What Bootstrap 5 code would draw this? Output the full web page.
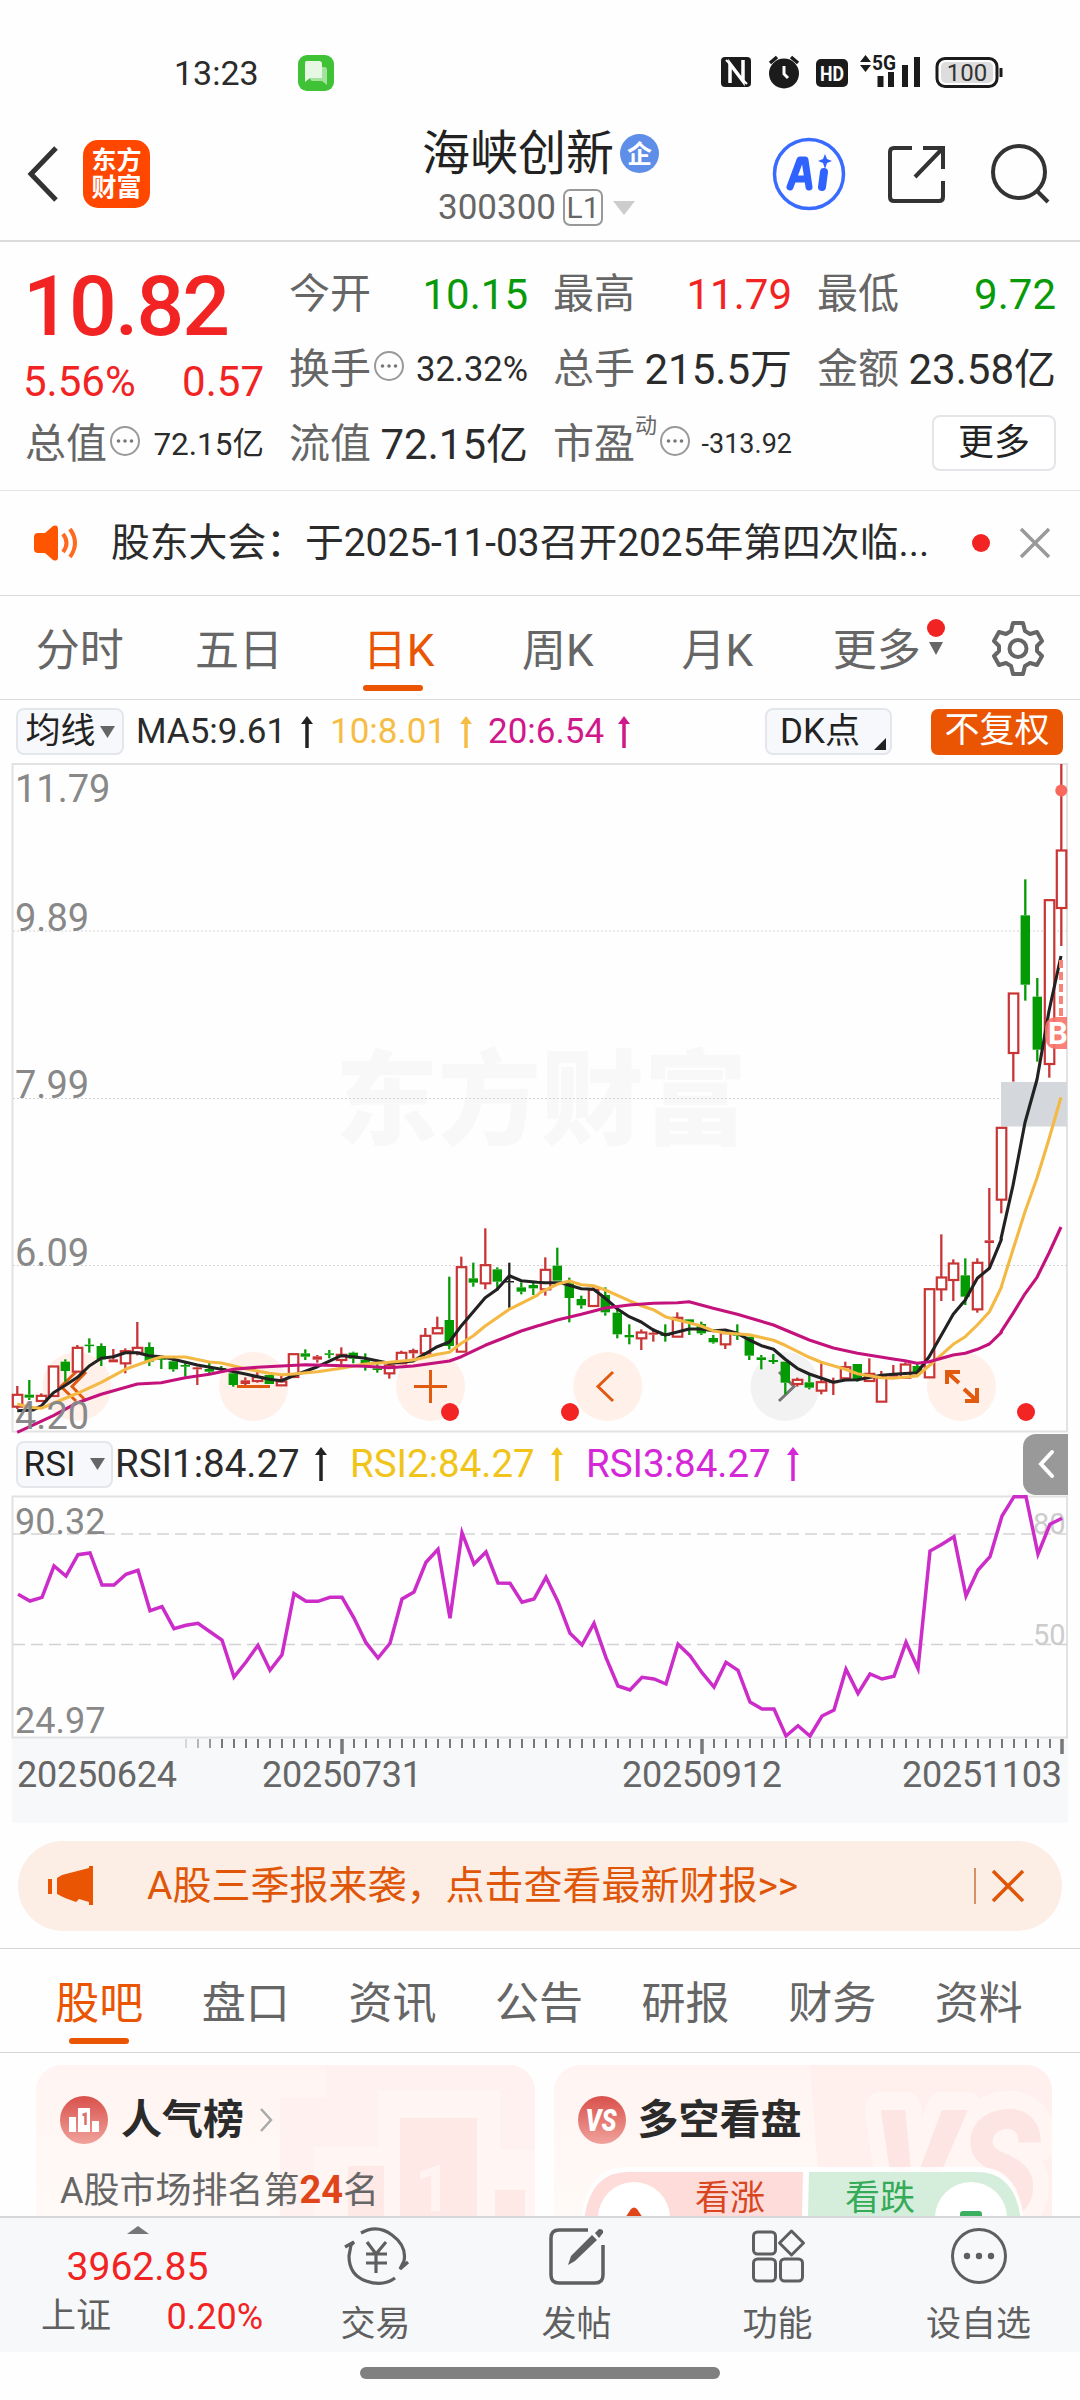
<!DOCTYPE html>
<html lang="zh-CN">
<head>
<meta charset="utf-8">
<meta name="viewport" content="width=device-width, initial-scale=1">
<title>海峡创新 300300</title>
<link rel="stylesheet" href="https://cdn.jsdelivr.net/npm/bootstrap@5.3.0/dist/css/bootstrap.min.css">
<style>
:root{--orange:#ea5504;--red:#f12323;--green:#099a09;--ink:#2b2b2b;--gray:#666;--line:#dadada}
body{width:1080px;height:2400px;overflow:hidden;background:#fefefe;color:var(--ink);font-family:Roboto,"Noto Sans CJK SC",sans-serif;line-height:1;letter-spacing:0}
svg{display:block;flex:none;overflow:visible}
svg text{font-family:Roboto,"Noto Sans CJK SC",sans-serif}
.statusbar{height:115px;padding:30px 76px 0 174px}
.clock{font-size:34px;width:124px;padding-top:26px}
.topbar{height:127px;padding:0 30px 8px 28px;border-bottom:2px solid var(--line)}
.brandbox{width:67px;height:68px;border-radius:15px;background:#ff4700;color:#fff;font-size:25px;font-weight:700;line-height:27px;margin-left:26px}
.titlebox{margin-left:272px;padding-top:6px}
.stockname{font-size:48px;line-height:54px;color:#222}
.codeline{font-size:35px;line-height:38px;color:#666;margin-top:8px;padding-left:16px}
.level{border:2px solid #999;border-radius:7px;width:40px;height:37px;font-size:30px;line-height:34px;margin-left:7px;margin-right:10px}
.quotes{height:249px;padding:15px 24px 0 25px;gap:25px;border-bottom:1px solid #e6e6e6}
.qcol{width:239px}
.qrow{height:75px}
.price{height:100px;font-size:84px;font-weight:500;color:var(--red);letter-spacing:-1.8px;margin-left:-2px}
.chg{height:50px;font-size:42px;color:var(--red);margin-left:-2px}
.lab{font-size:41px;color:var(--gray)}
.val{font-size:42px}
.tipic{margin:0 0 7px 2px}
.v-sm{font-size:34.5px}.v-xs{font-size:31.5px}.v-min{font-size:27px}
.up{color:var(--red)}.dn{color:var(--green)}
.morebtn{width:124px;height:56px;font-size:36px;border:2px solid #e3e5e8;border-radius:8px;padding:0;line-height:50px;color:#222;background:#fff;margin-bottom:4px}
.notice{height:105px;padding:0 30px 0 34px;border-bottom:1px solid var(--line);font-size:38.8px}
.dot{width:18px;height:18px;border-radius:50%;background:var(--red);flex:none}
.periods{height:104px;border-bottom:1px solid var(--line);font-size:44px;color:var(--gray);padding:0 36px 0 0}
.periods .slot{width:159.400px}
.tab-i{position:relative;display:inline-block;line-height:56px}
.periods .tab-i{top:3px}
.more-mark{position:absolute;left:94px;top:-4px}
.on{color:var(--orange)}
.uline{position:absolute;left:0;bottom:-12px;width:60px;height:6px;border-radius:3px;background:var(--orange)}
.indbar{height:63px;padding:0 17px 0 16px;font-size:35px}
.chip{height:47px;border:2px solid #e3e6ea;border-radius:8px;background:#f7f8fb;padding:0;font-size:35px;line-height:41px;color:#222}
.chip-on{height:46px;width:132px;border-radius:7px;background:var(--orange);color:#fff;font-size:35px;line-height:44px;text-align:center}
.rsibar{height:64px;padding-left:16px;font-size:38.500px}
.fold{width:45px;height:61px;border-radius:13px 0 0 13px;background:#999;margin-right:12px}
.banner{height:90px;margin:18px 18px 17px;border-radius:45px;background:#fcede5;color:#df5608;font-size:39px;padding:0 38px 0 30px}
.secttabs{height:105px;border-top:1px solid #d5d5d5;border-bottom:1px solid #d5d5d5;padding:0 28px 0 26px;font-size:44px;color:var(--gray)}
.secttabs .tab-i{top:3px}
.secttabs .uline{left:14px}
.feeds{height:163px;overflow:hidden;padding:12px 28px 0 36px;gap:19px}
.feedcard{width:499px;height:240px;border-radius:26px;background:linear-gradient(#fff4f2,#fffaf7 60%);position:relative;overflow:hidden}
.deco{position:absolute;left:0;top:0}
.fc-body{position:relative;padding:30px 24px 0 24px}
.fc-title{font-size:41px;font-weight:700;line-height:50px;color:#2b2b2b}
.fc-sub{font-size:36px;color:var(--gray);line-height:44px;margin-top:23px}
.fc-sub b{color:#e0451a;font-size:38px}
.dock{height:136px;background:#f7f8fa;border-top:2px solid #d5d7da;color:#5f5f5f;font-size:35px}
.dock-idx{width:275px;padding-top:8px}
.dock-item{width:201px;padding-top:9px}
.dock-item span{margin-top:18px;line-height:44px}
.homebar{width:360px;height:12px;border-radius:6px;background:#808080;margin:15px auto 0}
</style>
</head>
<body>
<div class="statusbar d-flex align-items-start">
  <div class="clock">13:23</div>
  <svg width="36" height="36" viewBox="0 0 36 36" style="margin-top:25px"><rect width="36" height="36" rx="9" fill="#3fc235"/><path d="M8 6h13q3 0 3 3v14H12l-5 4V9q0-3 1-3z" fill="#e6f8e3"/><path d="M26 12q3 0 3 3v15l-5-4H15q-3 0-3-3h12V12z" fill="#a5e29d"/></svg>
  <svg class="ms-auto" width="287" height="36" viewBox="716 54 287 36" style="margin-top:24px">
    <rect x="720" y="57" width="30" height="30" rx="4" fill="#1b1b1b"/><path d="M729 83V64l13 17V60" fill="none" stroke="#fff" stroke-width="3.500"/><path d="M729 64l-4-4M742 80l4 4" stroke="#fff" stroke-width="2"/>
    <circle cx="783" cy="73.500" r="15" fill="#1b1b1b"/><path d="M769 63l7-6M797 63l-7-6" stroke="#1b1b1b" stroke-width="3.500"/><path d="M783 66v8l4 4" fill="none" stroke="#fff" stroke-width="3"/>
    <rect x="815" y="59" width="32" height="28" rx="5" fill="#1b1b1b"/><text x="831" y="81" font-size="21" font-weight="700" fill="#fff" text-anchor="middle" textLength="24" lengthAdjust="spacingAndGlyphs">HD</text>
    <path d="M859 62l5.500-7 5.500 7zM859 65l5.500 7 5.500-7z" fill="#1b1b1b"/><text x="871" y="70" font-size="20" font-weight="700" fill="#1b1b1b" textLength="24" lengthAdjust="spacingAndGlyphs">5G</text>
    <path d="M879.500 76v11M890 72v15M904 65v22M916 57v30" stroke="#1b1b1b" stroke-width="6"/>
    <rect x="936" y="58.500" width="60" height="28" rx="8" fill="none" stroke="#1b1b1b" stroke-width="3"/><rect x="940" y="62" width="52" height="21" rx="5" fill="#ddd"/><path d="M1000 68v9" stroke="#1b1b1b" stroke-width="3"/><text x="966" y="81" font-size="24" fill="#333" text-anchor="middle">100</text>
  </svg>
</div>

<header class="topbar d-flex align-items-center">
  <svg width="29" height="54" viewBox="0 0 29 54"><path d="M28 1L3 27l25 26" fill="none" stroke="#333" stroke-width="5"/></svg>
  <div class="brandbox d-flex flex-column justify-content-center text-center"><span>东方</span><span>财富</span></div>
  <div class="titlebox d-flex flex-column">
    <div class="d-flex align-items-center stockname">海峡创新<svg width="39" height="39" viewBox="0 0 39 39" style="margin-left:6px"><circle cx="19.500" cy="19.500" r="19.500" fill="#5f8ee8"/><text x="19.500" y="28.500" font-size="25" font-weight="700" fill="#fff" text-anchor="middle">企</text></svg></div>
    <div class="d-flex align-items-center codeline">300300<span class="level text-center">L1</span><svg width="22" height="14" viewBox="0 0 22 14"><path d="M0 0h22L11 14z" fill="#ccc"/></svg></div>
  </div>
  <svg class="ms-auto" width="72" height="72" viewBox="0 0 72 72"><circle cx="36" cy="36" r="34.500" fill="none" stroke="#3a6bff" stroke-width="3.500"/><path d="M17 49L27 22h5l4 27M22 41h12" fill="none" stroke="#2f62ff" stroke-width="7" stroke-linecap="round" stroke-linejoin="round"/><path d="M51 34l-2 15" stroke="#2f62ff" stroke-width="8" stroke-linecap="round"/><path d="M52 16l2 5 5 2-5 2-2 6-2-6-5-2 5-2z" fill="#2f62ff"/></svg>
  <svg width="58" height="58" viewBox="0 0 58 58" style="margin-left:43px"><path d="M24 3H6q-4 0-4 4v45q0 4 4 4h45q4 0 4-4V36M55 24V3H35M55 3L27 32" fill="none" stroke="#333" stroke-width="4"/></svg>
  <svg width="59" height="59" viewBox="0 0 59 59" style="margin-left:45px"><circle cx="28" cy="28" r="26" fill="none" stroke="#333" stroke-width="4"/><path d="M46 47l11 11" stroke="#333" stroke-width="4"/></svg>
</header>

<section class="quotes d-flex">
  <div class="qcol">
    <div class="price d-flex align-items-center">10.82</div>
    <div class="chg d-flex align-items-center justify-content-between"><span>5.56%</span><span>0.57</span></div>
    <div class="qrow d-flex align-items-center"><span class="lab">总值</span><svg class="tipic" width="30" height="30" viewBox="0 0 30 30"><use href="#tip"/></svg><span class="v-xs ms-auto">72.15亿</span></div>
  </div>
  <div class="qcol">
    <div class="qrow d-flex align-items-center justify-content-between"><span class="lab">今开</span><span class="val dn">10.15</span></div>
    <div class="qrow d-flex align-items-center"><span class="lab">换手</span><svg class="tipic" width="30" height="30" viewBox="0 0 30 30"><g id="tip"><circle cx="16" cy="15" r="14" fill="none" stroke="#999" stroke-width="2"/><g fill="#777"><circle cx="9.500" cy="15" r="1.800"/><circle cx="16" cy="15" r="1.800"/><circle cx="22.500" cy="15" r="1.800"/></g></g></svg><span class="v-sm ms-auto">32.32%</span></div>
    <div class="qrow d-flex align-items-center justify-content-between"><span class="lab">流值</span><span class="val">72.15亿</span></div>
  </div>
  <div class="qcol">
    <div class="qrow d-flex align-items-center justify-content-between"><span class="lab">最高</span><span class="val up">11.79</span></div>
    <div class="qrow d-flex align-items-center justify-content-between"><span class="lab">总手</span><span class="val">215.5万</span></div>
    <div class="qrow d-flex align-items-center"><span class="lab">市盈</span><span class="lab align-self-start" style="font-size:22px;padding-top:8px">动</span><svg class="tipic" width="30" height="30" viewBox="0 0 30 30"><use href="#tip"/></svg><span class="v-min ms-auto">-313.92</span></div>
  </div>
  <div class="qcol">
    <div class="qrow d-flex align-items-center justify-content-between"><span class="lab">最低</span><span class="val dn">9.72</span></div>
    <div class="qrow d-flex align-items-center justify-content-between"><span class="lab">金额</span><span class="val">23.58亿</span></div>
    <div class="qrow d-flex align-items-center justify-content-end"><button class="btn morebtn">更多</button></div>
  </div>
</section>

<section class="notice d-flex align-items-center">
  <svg width="44" height="36" viewBox="0 0 44 36"><path d="M0 12q0-4 4-4h7L19 1q5-2 5 3v28q0 5-5 3l-8-7H4q-4 0-4-4z" fill="#ff5500"/><path d="M29 9q7 9 0 18M36 4q10 14 0 28" fill="none" stroke="#ff6a20" stroke-width="4"/></svg>
  <span class="text-nowrap" style="margin-left:33px">股东大会：于2025-11-03召开2025年第四次临...</span>
  <span class="dot ms-auto"></span>
  <svg width="30" height="30" viewBox="0 0 30 30" style="margin-left:30px"><path d="M1 1l28 28M29 1L1 29" stroke="#999" stroke-width="3.500"/></svg>
</section>

<nav class="periods d-flex align-items-center">
  <span class="slot text-center"><span class="tab-i">分时</span></span><span class="slot text-center"><span class="tab-i">五日</span></span><span class="slot text-center on"><span class="tab-i">日K<i class="uline"></i></span></span><span class="slot text-center"><span class="tab-i">周K</span></span><span class="slot text-center"><span class="tab-i">月K</span></span>
  <span class="slot text-center"><span class="tab-i">更多<svg class="more-mark" width="20" height="40" viewBox="0 0 20 40"><circle cx="9" cy="9" r="9" fill="#f12323"/><path d="M2 23h14l-7 13z" fill="#666"/></svg></span></span>
  <svg class="ms-auto" width="52" height="52" viewBox="0 0 52 52"><path d="M21 1h10l2 8 5 3 7-2 5 9-5 5v5l5 5-5 9-7-2-5 3-2 8H21l-2-8-5-3-7 2-5-9 5-5v-5l-5-5 5-9 7 2 5-3z" fill="none" stroke="#666" stroke-width="4" stroke-linejoin="round"/><circle cx="26" cy="26.500" r="8.500" fill="none" stroke="#666" stroke-width="4"/></svg>
</nav>

<div class="indbar d-flex align-items-center">
  <span class="chip d-flex align-items-center justify-content-center" style="width:108px">均线<svg width="15" height="12" viewBox="0 0 15 12" class="ms-1"><path d="M0 0h15L7.500 12z" fill="#666"/></svg></span>
  <span style="width:154px;margin-left:12px">MA5:9.61</span><svg width="40" height="32" viewBox="0 0 40 32"><path d="M17 32V6" stroke="#222" stroke-width="3.500"/><path d="M11 8l6-8 6 8z" fill="#222"/></svg>
  <span style="width:119px;color:#f6bd45">10:8.01</span><svg width="39" height="32" viewBox="0 0 39 32"><path d="M17 32V6" stroke="#f6bd45" stroke-width="3.500"/><path d="M11 8l6-8 6 8z" fill="#f6bd45"/></svg>
  <span style="width:119px;color:#d0188a">20:6.54</span><svg width="34" height="32" viewBox="0 0 34 32"><path d="M17 32V6" stroke="#d0188a" stroke-width="3.500"/><path d="M11 8l6-8 6 8z" fill="#d0188a"/></svg>
  <span class="chip d-flex align-items-center ms-auto" style="width:127px;padding-left:13px">DK点<svg width="12" height="12" viewBox="0 0 12 12" style="margin:24px 0 0 14px"><path d="M12 0v12H0z" fill="#222"/></svg></span>
  <span class="chip-on" style="margin-left:39px">不复权</span>
</div>

<svg id="kline" width="1080" height="669" viewBox="0 763 1080 669"></svg>

<div class="rsibar d-flex align-items-center">
  <span class="chip d-flex align-items-center justify-content-center" style="width:97px;font-size:35px">RSI<svg width="15" height="12" viewBox="0 0 15 12" style="margin-left:15px"><path d="M0 0h15L7.500 12z" fill="#666"/></svg></span>
  <span style="width:198px;margin-left:2px">RSI1:84.27</span><svg width="37" height="34" viewBox="0 0 37 34"><path d="M8 34V6" stroke="#222" stroke-width="3.500"/><path d="M2 8l6-8 6 8z" fill="#222"/></svg>
  <span style="width:200px;color:#f1c419">RSI2:84.27</span><svg width="36" height="34" viewBox="0 0 36 34"><path d="M7 34V6" stroke="#f1c419" stroke-width="3.500"/><path d="M1 8l6-8 6 8z" fill="#f1c419"/></svg>
  <span style="width:200px;color:#d428d8">RSI3:84.27</span><svg width="36" height="34" viewBox="0 0 36 34"><path d="M7 34V6" stroke="#d428d8" stroke-width="3.500"/><path d="M1 8l6-8 6 8z" fill="#d428d8"/></svg>
  <span class="fold ms-auto d-flex align-items-center justify-content-center"><svg width="16" height="26" viewBox="0 0 16 26"><path d="M14 1L3 13l11 12" fill="none" stroke="#fff" stroke-width="4" stroke-linecap="round"/></svg></span>
</div>

<svg id="rsi" width="1080" height="327" viewBox="0 1496 1080 327"></svg>

<div class="banner d-flex align-items-center">
  <svg width="45" height="40" viewBox="0 0 45 40"><path d="M0 13h4v15H0zM9 12l5-3L41 2V0h4v39h-4v-3l-10-3-3 3-11-4-8-4z" fill="#ea5504"/></svg>
  <span class="text-nowrap" style="margin-left:54px">A股三季报来袭，点击查看最新财报&gt;&gt;</span>
  <svg class="ms-auto" width="50" height="36" viewBox="0 0 50 36"><path d="M1 0v36" stroke="#c9703c" stroke-width="1.500"/><path d="M19 3l30 30M49 3L19 33" stroke="#df5608" stroke-width="3.500"/></svg>
</div>

<nav class="secttabs d-flex align-items-center">
  <span class="flex-fill text-center on"><span class="tab-i">股吧<i class="uline"></i></span></span><span class="flex-fill text-center"><span class="tab-i">盘口</span></span><span class="flex-fill text-center"><span class="tab-i">资讯</span></span><span class="flex-fill text-center"><span class="tab-i">公告</span></span><span class="flex-fill text-center"><span class="tab-i">研报</span></span><span class="flex-fill text-center"><span class="tab-i">财务</span></span><span class="flex-fill text-center"><span class="tab-i">资料</span></span>
</nav>

<section class="feeds d-flex">
  <div class="feedcard">
    <svg class="deco" width="499" height="240" viewBox="0 0 499 240">
      <path d="M290 0h209v240H244V32h46z" fill="#fff1ef"/><path d="M342 25h122v60h35v155H278V82h64z" fill="#fff6f4"/><path d="M364 53h77v187h-77zM312 101h36v139h-36zM459 125h30v115h-30z" fill="#fee9e7"/><text x="379" y="146" font-size="64" font-weight="700" fill="#fff4f2">1</text>
    </svg>
    <div class="fc-body">
      <div class="d-flex align-items-center fc-title"><svg width="48" height="48" viewBox="0 0 48 48"><defs><linearGradient id="bg1" x1="0" y1="0" x2="0" y2="1"><stop stop-color="#d9504b"/><stop offset="1" stop-color="#f0a29c"/></linearGradient></defs><circle cx="24" cy="24" r="24" fill="url(#bg1)"/><path d="M9 21h7v15H9zM18 12h12v24H18zM32 25h7v11h-7z" fill="#fff"/><path d="M22.500 19l3-1v11" fill="none" stroke="#dd6d66" stroke-width="2.500"/></svg><span style="margin-left:13px">人气榜</span><svg width="14" height="24" viewBox="0 0 14 24" style="margin-left:15px"><path d="M2 1l10 11L2 23" fill="none" stroke="#aaa" stroke-width="2.500"/></svg></div>
      <div class="fc-sub">A股市场排名第<b>24</b>名</div>
    </div>
  </div>
  <div class="feedcard">
    <svg class="deco" width="499" height="240" viewBox="0 0 499 240">
      <path d="M256 0h243v240H274z" fill="#fff0ee"/><text x="318" y="153" font-size="152" font-weight="900" font-style="italic" fill="#fde5e3" stroke="#fff5f3" stroke-width="36" stroke-linejoin="round" paint-order="stroke" textLength="168" lengthAdjust="spacingAndGlyphs">VS</text>
      <path d="M26 240v-66q0-72 46-72h353q46 0 46 72v66z" fill="#fff" fill-opacity=".85"/>
      <path d="M29 240v-66q0-67 45-67h175l-3 133z" fill="#fddcda"/><path d="M255 107h168q45 0 45 67v66H252z" fill="#d5eedb"/>
      <circle cx="80" cy="153" r="36" fill="#fff"/><circle cx="417" cy="153" r="36" fill="#fff"/>
      <path d="M77 144q3-3 6 0l8 12H69z" fill="#e0451a"/><rect x="406" y="146" width="22" height="8" rx="3" fill="#3bb060"/>
      <text x="141" y="145" font-size="35" fill="#d8461f">看涨</text><text x="291" y="145" font-size="35" fill="#35aa58">看跌</text>
    </svg>
    <div class="fc-body"><div class="d-flex align-items-center fc-title"><svg width="48" height="48" viewBox="0 0 48 48"><circle cx="24" cy="24" r="24" fill="url(#bg1)"/><text x="23" y="35" font-size="32" font-weight="900" font-style="italic" fill="#fff" text-anchor="middle" textLength="31" lengthAdjust="spacingAndGlyphs">VS</text></svg><span style="margin-left:12px">多空看盘</span></div></div>
  </div>
</section>

<footer class="dock d-flex">
  <div class="dock-idx text-center">
    <svg class="mx-auto" width="22" height="8" viewBox="0 0 22 8"><path d="M11 0l11 8H0z" fill="#777"/></svg>
    <div class="up" style="font-size:39px;line-height:44px;margin-top:11px">3962.85</div>
    <div class="d-flex justify-content-between" style="padding:6px 12px 0 41px;line-height:44px"><span>上证</span><span class="up" style="font-size:36px">0.20%</span></div>
  </div>
  <div class="dock-item d-flex flex-column align-items-center"><svg width="66" height="58" viewBox="0 0 66 58"><g fill="none" stroke="#5f5f5f" stroke-width="3.200"><path d="M18 6Q34-3 49 8T61 34l-4 8 8-7M52 51Q40 60 23 54T6 29l2-11 3-3-9 5M24 15l9 12 10-12M33 27v19M23 27h21M23 36h21"/></g></svg><span>交易</span></div>
  <div class="dock-item d-flex flex-column align-items-center"><svg width="56" height="58" viewBox="0 0 56 58"><path d="M39 3H10Q2 3 2 11v37q0 8 8 8h36q8 0 8-8V18" fill="none" stroke="#5f5f5f" stroke-width="3.500"/><path d="M19 38l3-9L43 8l5 5-22 21z" fill="#5f5f5f"/><path d="M46 6l4-4q5 0 4 4l-4 5z" fill="#5f5f5f"/></svg><span>发帖</span></div>
  <div class="dock-item d-flex flex-column align-items-center"><svg width="54" height="58" viewBox="0 0 54 58"><g fill="none" stroke="#5f5f5f" stroke-width="3"><rect x="2.500" y="5" width="22" height="22" rx="4"/><rect x="2.500" y="32" width="22" height="22" rx="4"/><rect x="29.500" y="32" width="22" height="22" rx="4"/><path d="M40.500 4l12 12-12 12-12-12z" stroke-linejoin="round"/></g></svg><span>功能</span></div>
  <div class="dock-item d-flex flex-column align-items-center"><svg width="58" height="58" viewBox="0 0 58 58"><circle cx="29" cy="29" r="26.500" fill="none" stroke="#5f5f5f" stroke-width="3"/><g fill="#5f5f5f"><circle cx="17" cy="29" r="3.200"/><circle cx="29" cy="29" r="3.200"/><circle cx="41" cy="29" r="3.200"/></g></svg><span>设自选</span></div>
</footer>
<div class="homebar"></div>

<script>
// Daily bars: [kind, high, bodyTop, bodyBottom, low] in thirds of a pixel below y=1200
const bars=[
['r',558,583,620,627],['g',540,584,593,600],['r',580,586,603,605],['r',498,498,588,588],['g',478,485,513,545],['r',435,442,515,515],['g',415,434,438,458],['g',430,438,478,498],['r',447,478,487,487],['r',445,452,490,520],['r',366,442,458,466],
['g',427,441,485,498],['g',470,475,479,507],['g',478,484,508,515],['g',485,495,500,530],['r',500,502,508,555],['g',488,507,515,522],['g',498,504,509,515],['g',520,520,555,560],['r',532,541,552,555],['r',515,530,543,548],['g',525,525,552,552],['r',528,543,556,558],
['r',461,461,531,531],['g',448,460,470,480],['r',465,469,479,488],['g',450,460,464,475],['r',442,463,480,493],['g',455,458,476,490],['g',460,480,500,512],['g',490,505,510,518],['r',492,495,520,536],['r',452,457,490,492],['r',446,450,460,475],['r',384,406,460,460],['r',350,383,400,400],
['g',230,360,438,448],['r',170,200,455,455],['g',188,235,248,260],['r',85,194,250,268],['g',202,208,245,272],['k',188,243,247,323],['g',247,262,275,283],['g',247,255,265,285],
['r',172,208,268,287],['g',143,197,242,242],['g',233,250,294,367],['g',287,297,316,326],['r',262,268,318,318],['g',262,285,337,347],['g',330,338,403,415],['g',373,405,412,433],['r',388,396,415,450],['r',385,398,404,425],['g',373,402,408,425],['r',337,352,410,410],['g',358,358,368,405],['g',365,372,400,405],
['g',405,414,427,431],['r',398,398,433,447],['g',373,402,407,420],['g',410,410,467,480],['g',465,472,480,508],['g',462,480,486,492],['g',485,485,548,583],['r',533,538,552,560],['g',525,547,563,568],['r',490,545,572,583],['r',533,545,549,585],['r',485,500,535,537],['g',492,492,540,545],['r',475,520,543,543],
['r',513,530,605,605],['r',495,522,530,530],['r',487,492,533,533],['g',488,498,518,525],['r',266,266,532,532],['r',103,231,268,303],['r',178,189,240,303],['g',175,226,290,315],['r',175,187,328,338],
['r',-36,121,129,207],['r',-218,-218,-1,40],['r',-621,-621,-441,-355],['g',-962,-854,-646,-598],['g',-666,-610,-451,-415],['r',-901,-901,-408,-367],['r',-1308,-1050,-876,-762]];
const X=i=>17.3+12*i, Y=v=>1200+v/3;
const col={r:'#c93434',g:'#049a04',k:'#222'};
let s='';
const line=(x1,y1,x2,y2,c,w,e='')=>`<line x1="${x1}" y1="${y1}" x2="${x2}" y2="${y2}" stroke="${c}" stroke-width="${w}" ${e}/>`;
s+='<rect x="12.500" y="764" width="1054.500" height="667.500" fill="none" stroke="#e2e2e2" stroke-width="2"/>';
s+='<text x="541" y="1137" font-size="103" font-weight="900" fill="#f8f8f8" text-anchor="middle">东方财富</text>';
[931,1098.5,1265.5].forEach(y=>s+=line(13,y,1067,y,'#d4d4d4',1,'stroke-dasharray="2 2"'));
s+='<rect x="1001" y="1082" width="66" height="44.500" fill="#d4d7dc"/>';
[76.8,253.6,430.5,607.8,785,961.5].forEach((x,i)=>s+=`<circle cx="${x}" cy="1386.500" r="34.500" fill="${i==4?'#f2f2f2':'#fff0e9'}"/>`);
s+='<g fill="none" stroke="#e05a10" stroke-width="3"><path d="M76 1372l-15 14.500 15 14.500M86 1372l-14 14.500 14 14.500M237 1386.500h33M414 1386.500h33M430.500 1370v33M613 1372l-15 14.500 15 14.500"/></g>';
s+='<path d="M779 1372l15 14.500-15 14.500" fill="none" stroke="#777" stroke-width="3"/>';
s+='<g fill="none" stroke="#e05a10" stroke-width="4"><path d="M947 1384v-12h13M947 1372l12 11M965 1401h12v-13M977 1401l-13-12"/></g>';
bars.forEach((b,i)=>{
  const x=X(i),[k,h,t,bo,l]=b,c=col[k];
  s+=line(x,Y(h),x,Y(t),c,2.3)+line(x,Y(bo),x,Y(l),c,2.3);
  if(k=='r'&&bo-t>11)s+=`<rect x="${x-4.500}" y="${Y(t)+.5}" width="9.500" height="${(bo-t)/3-.5}" fill="#fff" stroke="${c}" stroke-width="2.200"/>`;
  else s+=`<rect x="${x-4.700}" y="${Y(t)}" width="9.400" height="${Math.max(1.5,(bo-t)/3)}" fill="${c}"/>`;
});
// Moving averages: sampled [bar position, level]
const L=[p=>[p[0]/2.904,1200+p[1]/3],p=>[540+p[0]/2.904,1200+p[1]/3],p=>[860+p[0]/3,740+p[1]/2.306]];
const ma=(a,c)=>{s+=`<polyline fill="none" stroke="${c}" stroke-width="3.100" stroke-linejoin="round" points="${a.map((g,k)=>g.map(p=>L[k](p).map(n=>n.toFixed(1)).join()).join(' ')).join(' ')}"/>`};
ma([[[50,632],[95,630],[120,618],[155,578],[190,556],[225,532],[259,498],[294,475],[329,470],[364,458],[399,458],[433,467],[468,470],[503,478],[573,495],[643,508],[713,522],[782,538],[817,542],[852,527],[922,500],[991,467],[1025,470],[1060,475],[1130,490],[1200,483],[1270,440],[1305,426],[1340,377],[1409,293],[1444,268],[1479,227],[1514,242],[1560,247]],
[[14,248],[60,248],[120,266],[155,268],[190,295],[225,327],[259,350],[294,366],[329,390],[364,405],[399,396],[433,387],[468,387],[503,392],[538,390],[573,400],[608,420],[643,437],[678,448],[712,478],[747,505],[782,522],[852,547],[887,540],[922,539],[991,526],[1025,523],[1095,518],[1130,470],[1200,343],[1235,300],[1270,235],[1305,205],[1340,118]],
[[423,1150],[459,1027],[495,882],[531,783],[567,625],[603,498]]],'#222');
ma([[[50,612],[85,622],[120,625],[225,580],[294,547],[364,508],[433,482],[468,471],[538,471],[608,486],[643,489],[713,506],[782,520],[817,524],[852,522],[922,515],[991,505],[1060,492],[1130,487],[1200,480],[1235,472],[1270,463],[1305,457],[1340,430],[1374,408],[1409,378],[1479,328],[1560,286]],
[[0,278],[50,253],[85,243],[120,254],[155,257],[190,270],[259,302],[294,317],[329,329],[364,350],[399,360],[433,368],[468,378],[503,392],[538,399],[608,404],[678,421],[712,436],[782,472],[817,487],[887,508],[922,521],[991,533],[1025,535],[1095,528],[1130,497],[1200,433],[1235,410],[1270,375],[1305,335],[1340,262]],
[[423,1263],[459,1175],[495,1088],[531,1010],[567,920],[603,824]]],'#f3b944');
ma([[[50,697],[155,647],[225,608],[294,583],[399,552],[468,548],[538,533],[608,523],[678,508],[747,502],[817,498],[887,494],[1060,499],[1130,503],[1200,498],[1305,483],[1340,470],[1409,436],[1514,393],[1560,378]],
[[0,376],[50,360],[120,343],[190,324],[259,315],[329,310],[399,308],[433,305],[503,325],[573,343],[678,375],[782,420],[852,444],[922,460],[1025,477],[1060,482],[1095,490],[1130,485],[1200,465],[1235,460],[1270,448],[1305,432],[1340,397]],
[[423,1365],[459,1322],[495,1277],[531,1239],[567,1183],[603,1123]]],'#c4127c');
s+=line(1061,960,1061,1016,'#f88478',4,'stroke-dasharray="8 4"');
s+='<circle cx="1061.300" cy="790.500" r="6" fill="#f8685c"/><path d="M1067 1017h-10q-12 0-12 12v6q0 14 12 14h10z" fill="#f97368" fill-opacity=".9"/><text x="1048" y="1044" font-size="31" font-weight="700" fill="#fff">B</text>';
[[450,1412],[570,1412],[1026,1412]].forEach(p=>s+=`<circle cx="${p[0]}" cy="${p[1]}" r="9" fill="#f22424"/>`);
s+='<g font-size="38" fill="#888">'+[['11.79',802],['9.89',931],['7.99',1098],['6.09',1265.5],['4.20',1429]].map(t=>`<text x="15" y="${t[1]}">${t[0]}</text>`).join('')+'</g>';
document.getElementById('kline').innerHTML=s;

// RSI panel, same vertical unit below y=1480
const rsi=[343,363,352,258,288,224,219,315,315,283,271,392,380,446,436,430,455,480,591,546,496,571,524,341,364,364,352,352,414,488,534,490,357,336,247,208,415,158,252,216,309,310,367,357,292,365,460,495,430,533,618,630,592,597,612,493,527,578,621,547,571,666,687,687,768,737,768,708,690,568,640,582,597,589,487,566,213,193,170,348,270,230,108,50,50,222,133,115];
s='<rect x="12" y="1738" width="1056" height="85" fill="#f7f8fa"/><rect x="12.500" y="1496.500" width="1054.500" height="241" fill="none" stroke="#e2e2e2" stroke-width="2"/>';
s+=line(13,1534,1067,1534,'#dedede',2,'stroke-dasharray="12 6"')+line(13,1644.5,1067,1644.5,'#d2d2d2',1.5,'stroke-dasharray="12 6"');
s+='<g font-size="29" fill="#ccc"><text x="1033" y="1533.500">80</text><text x="1033" y="1644.500">50</text></g>';
s+='<g font-size="36" fill="#888"><text x="15" y="1534">90.32</text><text x="15" y="1732.500">24.97</text></g>';
s+=`<polyline fill="none" stroke="#cc2cc8" stroke-width="3.500" points="${rsi.map((v,i)=>(18+12*i).toFixed(1)+','+(1480+v/3).toFixed(1)).join(' ')}"/>`;
for(let i=14;i<88;i++){const big=[27,57,87].includes(i);s+=line(18+12*i,1739,18+12*i,big?1754:1748,'#777',big?3.5:2,`opacity="${Math.min(1,(i-13)*.25)}"`)}
s+='<g font-size="36" fill="#666">'+[[17,'20250624'],[262,'20250731'],[622,'20250912'],[902,'20251103']].map(t=>`<text x="${t[0]}" y="1786.500" textLength="160">${t[1]}</text>`).join('')+'</g>';
document.getElementById('rsi').innerHTML=s;
</script>
<script src="https://cdn.jsdelivr.net/npm/bootstrap@5.3.0/dist/js/bootstrap.bundle.min.js"></script>
</body>
</html>
